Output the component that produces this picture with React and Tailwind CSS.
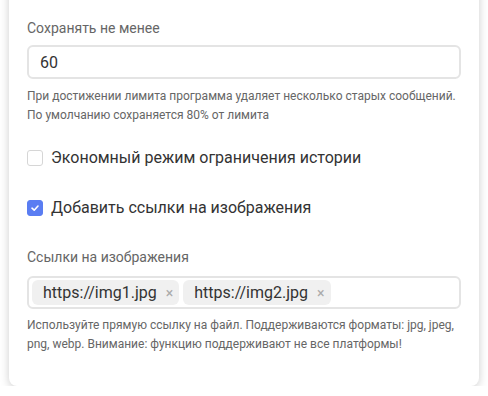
import React, { useState } from 'react';

// Настройки истории: лимит, экономный режим, ссылки на изображения
export default function App() {
    const [keep, setKeep] = useState('60');
    const [economy, setEconomy] = useState(false);
    const [withImages, setWithImages] = useState(true);
    const [links, setLinks] = useState(['https://img1.jpg', 'https://img2.jpg']);

    const removeLink = (url) => setLinks(links.filter(l => l !== url));

    return (
        <div className="min-h-screen bg-white font-['Roboto',sans-serif] text-[#333]">
            <div className="mx-[9px] w-[470px] -mt-3 pt-[30px] pb-[32px] px-[18px] bg-white rounded-b-lg shadow-[0_2px_10px_rgba(0,0,0,0.2)]">
                <label className="block text-sm leading-5 text-[#666]">Сохранять не менее</label>
                <input
                    type="text"
                    value={keep}
                    onChange={(e) => setKeep(e.target.value)}
                    className="mt-[7px] w-full h-[34px] px-[11px] border-2 border-[#e4e4e4] rounded-md outline-none text-base text-[#333]"
                />
                <p className="mt-2 text-xs leading-[19px] text-[#666]">
                    При достижении лимита программа удаляет несколько старых сообщений.<br />
                    По умолчанию сохраняется 80% от лимита
                </p>

                <label className="mt-[21px] flex items-center gap-2 cursor-pointer text-base leading-6">
                    <input type="checkbox" checked={economy} onChange={() => setEconomy(!economy)} className="hidden" />
                    <span className={`w-4 h-4 rounded-[3px] flex items-center justify-center border ${economy ? 'bg-[#5a7df2] border-[#5a7df2]' : 'bg-white border-[#d6d6d6]'}`}>
                        {economy && <Tick />}
                    </span>
                    Экономный режим ограничения истории
                </label>

                <label className="mt-[26px] flex items-center gap-2 cursor-pointer text-base leading-6">
                    <input type="checkbox" checked={withImages} onChange={() => setWithImages(!withImages)} className="hidden" />
                    <span className={`w-4 h-4 rounded-[3px] flex items-center justify-center border ${withImages ? 'bg-[#5a7df2] border-[#5a7df2]' : 'bg-white border-[#d6d6d6]'}`}>
                        {withImages && <Tick />}
                    </span>
                    Добавить ссылки на изображения
                </label>

                <label className="mt-[27px] block text-sm leading-5 text-[#666]">Ссылки на изображения</label>
                <div className="mt-[9px] w-full h-[33px] px-[3px] border-2 border-[#e4e4e4] rounded-md flex items-center gap-[4px]">
                    {links.map(url => (
                        <span key={url} className="h-[25px] pl-[11px] pr-[6px] bg-[#f0f0f0] rounded-md flex items-center gap-[9px] text-base text-[#333]">
                            {url}
                            <button onClick={() => removeLink(url)} className="text-[#aaa] text-sm leading-none">×</button>
                        </span>
                    ))}
                </div>
                <p className="mt-[7px] text-xs leading-[19px] text-[#666]">
                    Используйте прямую ссылку на файл. Поддерживаются форматы: jpg, jpeg,<br />
                    png, webp. Внимание: функцию поддерживают не все платформы!
                </p>
            </div>
        </div>
    );
}

function Tick() {
    return (
        <svg width="10" height="10" viewBox="0 0 10 10" fill="none">
            <path d="M2 5.2 L4.2 7.2 L8 3" stroke="white" strokeWidth="1.6" strokeLinecap="round" strokeLinejoin="round" />
        </svg>
    );
}
